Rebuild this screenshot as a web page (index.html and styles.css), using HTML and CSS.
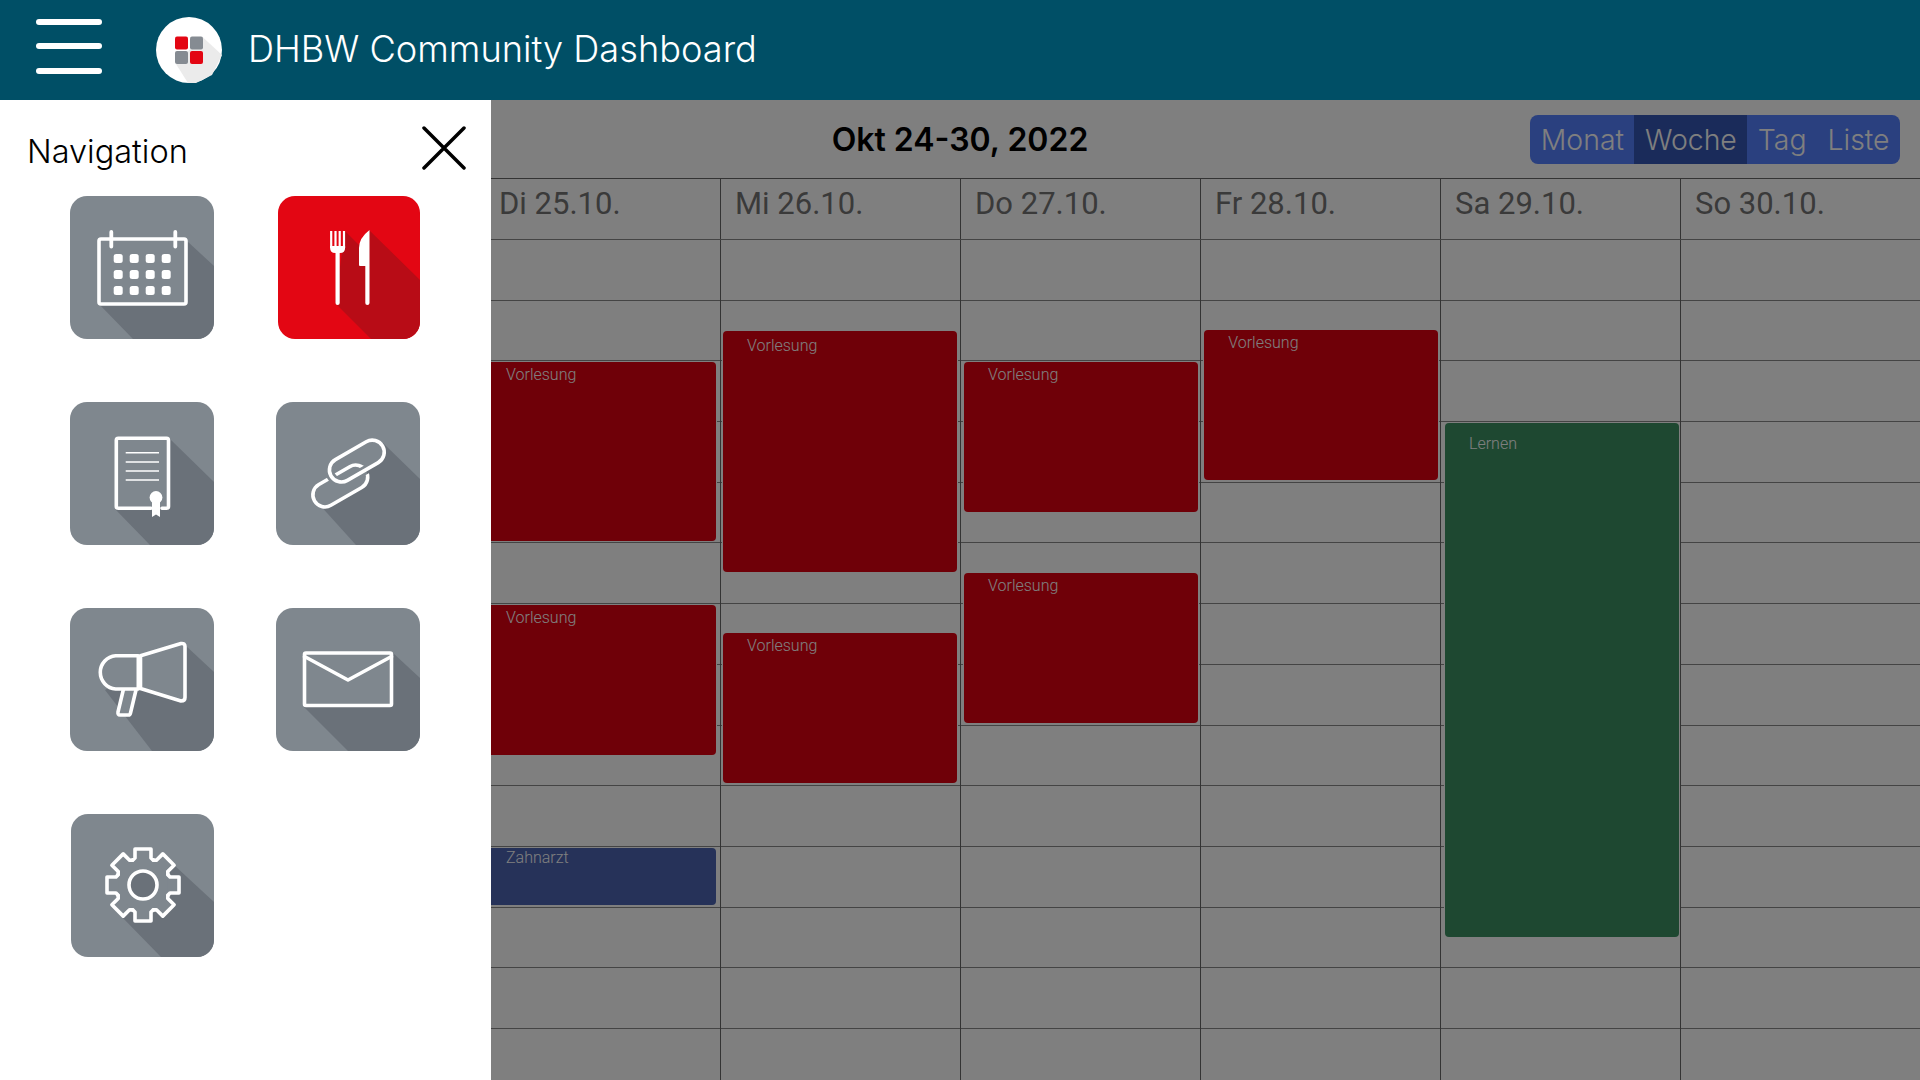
FILE: index.html
```html
<!DOCTYPE html>
<html lang="en">
<head>
    <meta charset="UTF-8">
    <meta name="viewport" content="width=device-width, initial-scale=1.0">
    <title>DHBW Community Dashboard</title>
    <link rel="stylesheet" href="styles.css">
</head>
<body>

    <!-- Top bar -->
    <header class="topbar">
        <div class="menu-btn">
            <span></span>
            <span></span>
            <span></span>
        </div>
        <svg class="logo" viewBox="0 0 66 66">
            <circle cx="33" cy="33" r="33" fill="#fff"/>
            <polygon points="46,19.5 66,38 56,58 40,66 32,66 20,47" fill="#ebebeb"/>
            <rect x="19" y="19.5" width="13" height="13" rx="2" fill="#e30613"/>
            <rect x="34" y="19.5" width="13" height="13" rx="2" fill="#858b92"/>
            <rect x="19" y="34" width="13" height="13" rx="2" fill="#858b92"/>
            <rect x="34" y="34" width="13" height="13" rx="2" fill="#e30613"/>
        </svg>
        <div class="app-title">DHBW Community Dashboard</div>
    </header>

    <div class="page">

        <!-- Calendar -->
        <main class="calendar">
            <div class="cal-toolbar">
                <div></div>
                <h2 class="cal-title">Okt 24-30, 2022</h2>
                <div class="view-switch">
                    <button type="button">Monat</button>
                    <button type="button" class="active">Woche</button>
                    <button type="button">Tag</button>
                    <button type="button">Liste</button>
                </div>
            </div>

            <div class="week">
                <div class="week-head">
                    <div class="day-name first">Di 25.10.</div>
                    <div class="day-name">Mi 26.10.</div>
                    <div class="day-name">Do 27.10.</div>
                    <div class="day-name">Fr 28.10.</div>
                    <div class="day-name">Sa 29.10.</div>
                    <div class="day-name">So 30.10.</div>
                </div>

                <div class="hours">
                    <div class="hour"></div>
                    <div class="hour"></div>
                    <div class="hour"></div>
                    <div class="hour"></div>
                    <div class="hour"></div>
                    <div class="hour"></div>
                    <div class="hour"></div>
                    <div class="hour"></div>
                    <div class="hour"></div>
                    <div class="hour"></div>
                    <div class="hour"></div>
                    <div class="hour"></div>
                    <div class="hour"></div>
                    <div class="hour"></div>
                </div>

                <div class="days">
                    <div class="day">
                        <div class="event red" style="left:2px;top:121.7px;height:179px">Vorlesung</div>
                        <div class="event red" style="left:2px;top:365px;height:150px">Vorlesung</div>
                        <div class="event blue" style="left:2px;top:607.7px;height:57.6px">Zahnarzt</div>
                    </div>
                    <div class="day">
                        <div class="event red low" style="left:3px;top:91.3px;height:241px">Vorlesung</div>
                        <div class="event red" style="left:3px;top:392.7px;height:150px">Vorlesung</div>
                    </div>
                    <div class="day">
                        <div class="event red" style="left:4px;top:121.7px;height:150px">Vorlesung</div>
                        <div class="event red" style="left:4px;top:333.3px;height:150px">Vorlesung</div>
                    </div>
                    <div class="day">
                        <div class="event red" style="left:4.2px;top:90px;height:150px">Vorlesung</div>
                    </div>
                    <div class="day">
                        <div class="event green lower" style="left:5px;top:182.7px;height:514px">Lernen</div>
                    </div>
                    <div class="day"></div>
                </div>
            </div>
        </main>

        <div class="backdrop"></div>

        <!-- Navigation drawer -->
        <aside class="drawer">
            <div class="drawer-head">
                <span class="drawer-title">Navigation</span>
                <svg class="close-icon" viewBox="0 0 44 44">
                    <path d="M2 2 L42 42 M42 2 L2 42"/>
                </svg>
            </div>

            <div class="tiles">
                <!-- Calendar -->
                <a class="tile">
                    <svg viewBox="0 0 144 143">
                        <polygon class="shade" points="117,45 144,70 144,143 63,143 28,107"/>
                        <rect class="line fill" x="29" y="43" width="87" height="65" rx="2"/>
                        <path class="line ring" d="M41.3 36 V50.5 M105.3 36 V50.5"/>
                        <g class="dots">
                            <rect x="43.7" y="58" width="9" height="9" rx="2.5"/>
                            <rect x="59.7" y="58" width="9" height="9" rx="2.5"/>
                            <rect x="75.7" y="58" width="9" height="9" rx="2.5"/>
                            <rect x="91.7" y="58" width="9" height="9" rx="2.5"/>
                            <rect x="43.7" y="74" width="9" height="9" rx="2.5"/>
                            <rect x="59.7" y="74" width="9" height="9" rx="2.5"/>
                            <rect x="75.7" y="74" width="9" height="9" rx="2.5"/>
                            <rect x="91.7" y="74" width="9" height="9" rx="2.5"/>
                            <rect x="43.7" y="90" width="9" height="9" rx="2.5"/>
                            <rect x="59.7" y="90" width="9" height="9" rx="2.5"/>
                            <rect x="75.7" y="90" width="9" height="9" rx="2.5"/>
                            <rect x="91.7" y="90" width="9" height="9" rx="2.5"/>
                        </g>
                    </svg>
                </a>

                <!-- Canteen -->
                <a class="tile tile-red">
                    <svg viewBox="0 0 144 143">
                        <polygon class="shade" points="67,35 81,49 91,34 144,86 144,143 93,143 57,107"/>
                        <path class="fork" d="M53.2 35 V52 M57.5 35 V52 M61.7 35 V52 M66 35 V52"/>
                        <path class="knife" d="M52.1 50 H67.1 V52 Q67.1 57 62 57 H61.7 V107 A2.1 2.1 0 0 1 57.5 107 V57 H57.2 Q52.1 57 52.1 52 Z"/>
                        <path class="knife" d="M91.5 34 Q81 42 81 52 V69 Q81 70 82 70 H87.3 V107 A2.1 2.1 0 0 0 91.5 107 Z"/>
                    </svg>
                </a>

                <!-- Certificate -->
                <a class="tile">
                    <svg viewBox="0 0 144 143">
                        <polygon class="shade" points="100,37 144,80 144,143 80,143 45,107"/>
                        <path class="line fill" d="M81 106.3 H48.3 Q46.3 106.3 46.3 104.3 V38.3 Q46.3 36.3 48.3 36.3 H96.5 Q98.5 36.3 98.5 38.3 V104.3 Q98.5 106.3 96.5 106.3 H92"/>
                        <path class="thin" d="M55.7 50.7 H89 M55.7 60 H89 M55.7 69 H89 M55.7 78 H89"/>
                        <circle class="solid" cx="86" cy="95.5" r="6.4"/>
                        <polygon class="solid" points="82,98 90,98 90,115 86,112.5 82,115"/>
                    </svg>
                </a>

                <!-- Links -->
                <a class="tile">
                    <svg viewBox="0 0 144 143">
                        <mask id="linkGap">
                            <rect width="144" height="143" fill="#fff"/>
                            <rect x="51" y="47" width="59.6" height="24" rx="12" transform="rotate(-30 81 59)" fill="none" stroke="#000" stroke-width="9"/>
                        </mask>
                        <polygon class="shade" points="107,41 144,77 144,143 80,143 42,101"/>
                        <rect class="fill" x="34.5" y="72" width="59.6" height="24" rx="12" transform="rotate(-30 64.3 84)"/>
                        <rect class="fill" x="51" y="47" width="59.6" height="24" rx="12" transform="rotate(-30 81 59)"/>
                        <g mask="url(#linkGap)">
                            <rect class="line" x="34.5" y="72" width="59.6" height="24" rx="12" transform="rotate(-30 64.3 84)"/>
                        </g>
                        <rect class="line" x="51" y="47" width="59.6" height="24" rx="12" transform="rotate(-30 81 59)"/>
                    </svg>
                </a>

                <!-- News -->
                <a class="tile">
                    <svg viewBox="0 0 144 143">
                        <polygon class="shade" points="115,37 144,64 144,143 82,143 35,82"/>
                        <path class="line fill" d="M53.5 81 L48 104 Q47.6 107 50 107 H58.5 Q60 107 60.5 105 L66 82"/>
                        <path class="line fill" d="M68.3 47.7 H45.7 A16.7 16.7 0 0 0 45.7 81 H68.3 Z"/>
                        <path class="line fill" d="M70.5 47.7 L111 35.5 Q115 35 115 38.5 V89.5 Q115 93 111 93 L70.5 80.5 Z"/>
                    </svg>
                </a>

                <!-- Mail -->
                <a class="tile">
                    <svg viewBox="0 0 144 143">
                        <polygon class="shade" points="117,45 144,70 144,143 72,143 27,98"/>
                        <rect class="line fill" x="28.5" y="45" width="87" height="52.5" rx="1.5"/>
                        <path class="line" d="M28.5 48.5 L72 72 L115.5 48.5"/>
                    </svg>
                </a>

                <!-- Settings -->
                <a class="tile tile-gear">
                    <svg viewBox="0 0 144 143">
                        <defs>
                            <path id="gearTooth" d="M61.7 46.1 L64 44 V35 H80 V44 L82.3 46.1"/>
                        </defs>
                        <polygon class="shade" points="103,51 144,89 144,143 90,143 49,101"/>
                        <circle class="fill" cx="72" cy="71" r="28"/>
                        <g class="line fill">
                            <use href="#gearTooth"/>
                            <use href="#gearTooth" transform="rotate(45 72 71)"/>
                            <use href="#gearTooth" transform="rotate(90 72 71)"/>
                            <use href="#gearTooth" transform="rotate(135 72 71)"/>
                            <use href="#gearTooth" transform="rotate(180 72 71)"/>
                            <use href="#gearTooth" transform="rotate(225 72 71)"/>
                            <use href="#gearTooth" transform="rotate(270 72 71)"/>
                            <use href="#gearTooth" transform="rotate(315 72 71)"/>
                        </g>
                        <circle class="line hole" cx="72" cy="71" r="14"/>
                    </svg>
                </a>
            </div>
        </aside>
    </div>

</body>
</html>
```

FILE: styles.css
```css
body {
    margin: 0;
    width: 1920px;
    height: 1080px;
    overflow: hidden;
    font-family: 'Inter', sans-serif;
    background-color: #fff;
}

/* Top bar */
.topbar {
    display: flex;
    align-items: center;
    height: 100px;
    padding-left: 36px;
    background-color: #004f66;
    color: #fff;
}

.menu-btn {
    display: flex;
    flex-direction: column;
    gap: 18.5px;
    width: 66px;
    margin-bottom: 8px;
}

.menu-btn span {
    height: 6px;
    border-radius: 3px;
    background-color: #fff;
}

.logo {
    width: 66px;
    height: 66px;
    margin-left: 54px;
}

.app-title {
    margin: 0 0 2px 26px;
    font-size: 36.2px;
    font-weight: 300;
}

/* Page area, the drawer lies over the calendar */
.page {
    position: relative;
    height: 980px;
    overflow: hidden;
}

.cal-toolbar {
    display: grid;
    grid-template-columns: 1fr auto 1fr;
    align-items: center;
    height: 78px;
}

.cal-title {
    margin: 0;
    font-size: 32px;
    font-weight: 600;
    color: #000;
}

.view-switch {
    justify-self: end;
    display: flex;
    height: 49px;
    margin: 0 20px 0 0;
    border-radius: 8px;
    overflow: hidden;
    background-color: #5480ff;
}

.view-switch button {
    padding: 0 10.5px;
    border: none;
    background: none;
    font-family: 'Inter', sans-serif;
    font-size: 28.4px;
    font-weight: 300;
    color: #fff;
}

.view-switch .active {
    background-color: #3456b4;
}

/* Week grid */
.week {
    position: relative;
}

.week-head {
    display: grid;
    grid-template-columns: repeat(6, 240px);
    height: 62px;
    box-sizing: border-box;
    padding-left: 480px;
    border-top: 1px solid #666;
    border-bottom: 1px solid #888;
}

.day-name {
    padding: 6px 0 0 14px;
    border-left: 1px solid #666;
    font-family: 'Roboto', sans-serif;
    font-size: 31px;
    color: #757575;
}

.day-name.first {
    padding-left: 18px;
}

.hour {
    height: 60.7px;
    box-sizing: border-box;
    border-bottom: 1px solid #888;
}

.days {
    position: absolute;
    top: 62px;
    left: 480px;
    display: grid;
    grid-template-columns: repeat(6, 240px);
    height: 918px;
}

.day {
    position: relative;
    border-left: 1px solid #666;
}

.event {
    position: absolute;
    box-sizing: border-box;
    width: 234px;
    margin-left: -1px;
    padding: 3px 0 0 24px;
    border-radius: 4px;
    box-shadow: 0 0 0 1px #fff;
    font-family: 'Roboto', sans-serif;
    font-size: 16px;
    font-weight: 300;
    color: #fff;
}

.event.low {
    padding-top: 5px;
}

.event.lower {
    padding-top: 11px;
}

.red {
    background-color: #df0010;
}

.blue {
    padding-top: 0;
    background-color: #4c64b2;
}

.green {
    background-color: #3c9063;
}

.backdrop {
    position: absolute;
    inset: 0;
    background-color: rgba(0, 0, 0, 0.5);
}

/* Navigation drawer */
.drawer {
    position: absolute;
    top: 0;
    left: 0;
    bottom: 0;
    width: 491px;
    background-color: #fff;
}

.drawer-head {
    display: flex;
    justify-content: space-between;
    height: 96px;
    box-sizing: border-box;
    padding: 32px 25px 0 27px;
}

.drawer-title {
    font-size: 32.5px;
    font-weight: 300;
    color: #000;
}

.close-icon {
    width: 44px;
    height: 44px;
    margin-top: -6px;
}

.close-icon path {
    fill: none;
    stroke: #000;
    stroke-width: 3.5;
    stroke-linecap: round;
}

.tiles {
    display: grid;
    grid-template-columns: 144px 144px;
    gap: 63px 62px;
    padding-left: 70px;
}

.tile {
    display: block;
    height: 143px;
    border-radius: 17px;
    overflow: hidden;
    background-color: #7f878e;
}

.tile svg {
    display: block;
    width: 144px;
    height: 143px;
}

.tile-red {
    margin-left: 1.5px;
    background-color: #e30613;
}

.tile-gear {
    margin-left: 1px;
}

/* Icon strokes */
.shade {
    fill: #6a7179;
}

.tile-red .shade {
    fill: #b80c16;
}

.line {
    fill: none;
    stroke: #fff;
    stroke-width: 3.6;
    stroke-linejoin: round;
    stroke-linecap: round;
}

.fill {
    fill: #7f878e;
}

.hole {
    fill: #6a7179;
}

.ring {
    stroke-width: 3.8;
}

.dots rect,
.solid {
    fill: #fff;
}

.thin {
    fill: none;
    stroke: #fff;
    stroke-width: 1.5;
}

.fork {
    fill: none;
    stroke: #fff;
    stroke-width: 2.2;
}

.knife {
    fill: #fff;
}
```
